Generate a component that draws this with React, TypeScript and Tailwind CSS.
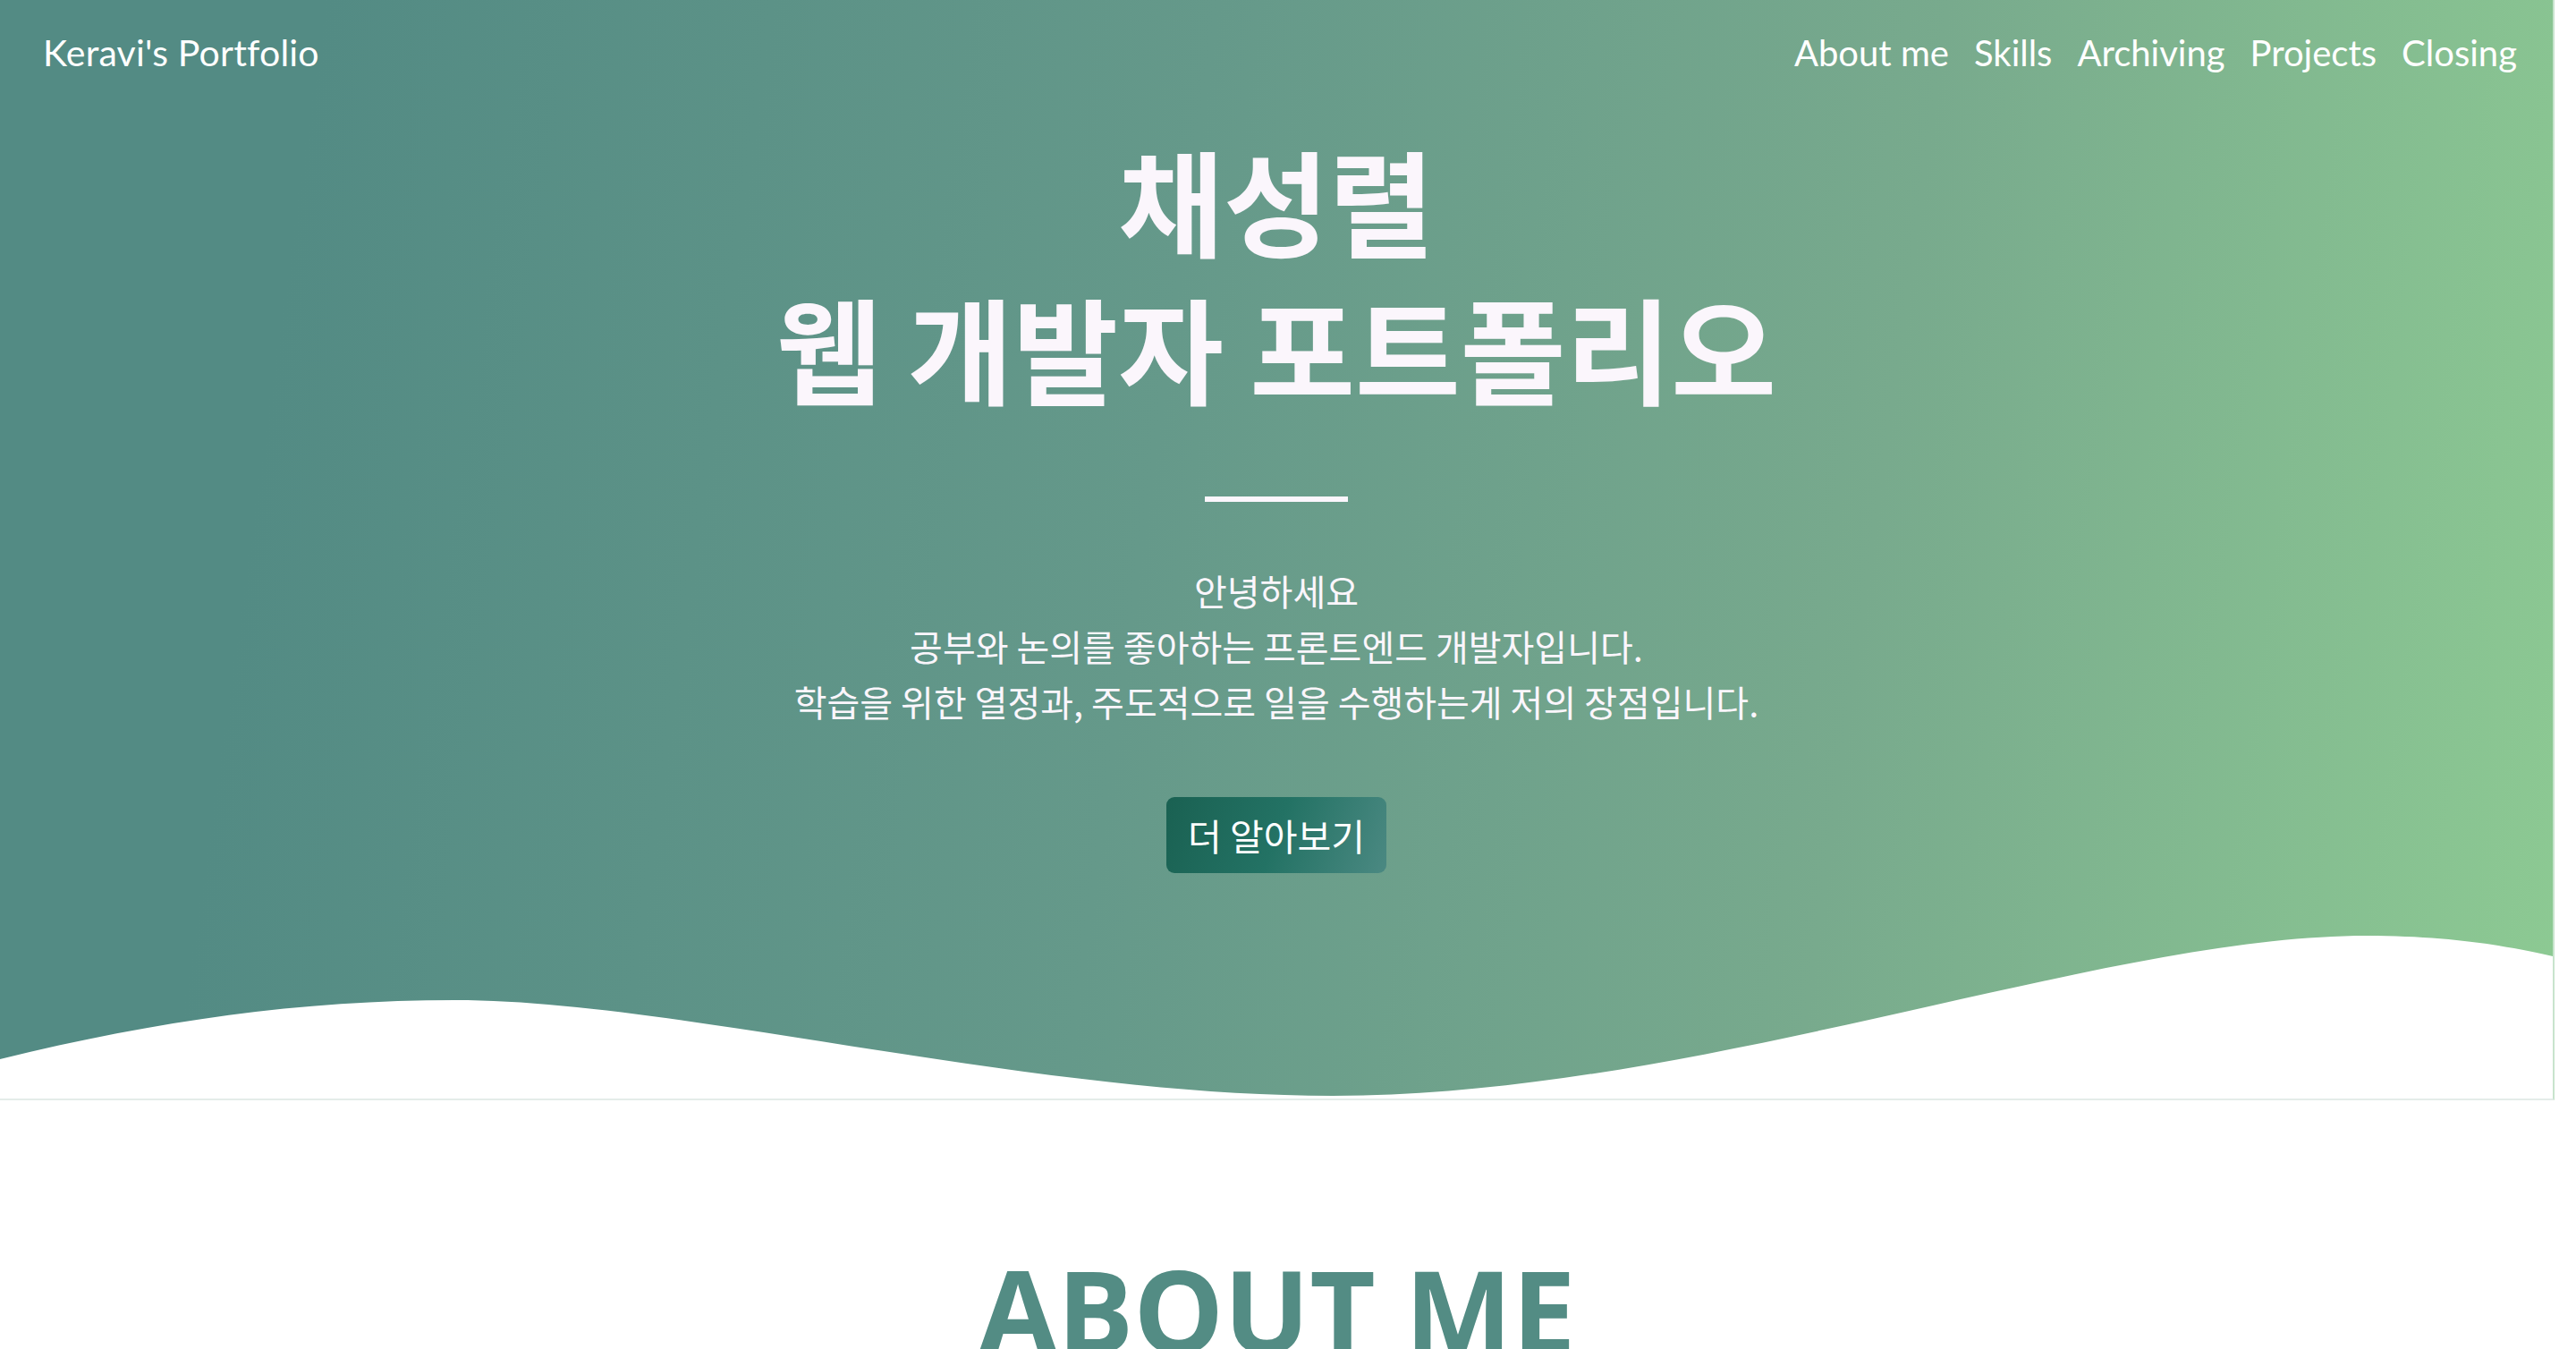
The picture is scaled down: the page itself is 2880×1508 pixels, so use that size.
const navLinks = ["About me", "Skills", "Archiving", "Projects", "Closing"];

function Wave() {
  return (
    <svg
      className="absolute bottom-0 left-0 w-full h-[200px]"
      viewBox="0 0 2856 200"
      preserveAspectRatio="none"
    >
      <path
        d="M0,156 C180,112 340,90 509,90 C760,90 1150,197 1491,197 C1900,197 2350,18 2648,18 C2740,18 2810,30 2856,41 L2856,200 L0,200 Z"
        fill="#ffffff"
      />
    </svg>
  );
}

function Hero() {
  return (
    <header className="relative w-full h-[1230px] border-r-2 border-b-2 border-r-[#c8e4cd] border-b-[#e4ece9] bg-[linear-gradient(98deg,#538b84_12%,#65998a_45%,#78aa8d_72%,#8dca93_100%)] overflow-hidden">
      <nav className="flex items-center justify-between h-[118px] pl-[48px] pr-[40px] font-['Lato','Liberation_Sans',sans-serif] text-white">
        <a href="#" className="text-[41px] tracking-[0.2px]">Keravi's Portfolio</a>
        <ul className="flex gap-[28px] text-[40px]">
          {navLinks.map((l) => (
            <li key={l}>
              <a href="#">{l}</a>
            </li>
          ))}
        </ul>
      </nav>

      <div className="flex flex-col items-center text-center text-[#fbf6fc] font-['Noto_Sans_CJK_KR',sans-serif]">
        <h1 className="mt-[22px] text-[128px] leading-[165px] font-bold">
          채성렬
          <br />
          웹 개발자 포트폴리오
        </h1>
        <hr className="mt-[85px] w-[160px] h-[6px] border-0 bg-[#fbf6fc]" />
        <p className="mt-[68px] text-[40px] leading-[62px] font-normal">
          안녕하세요
          <br />
          공부와 논의를 좋아하는 프론트엔드 개발자입니다.
          <br />
          학습을 위한 열정과, 주도적으로 일을 수행하는게 저의 장점입니다.
        </p>
        <button className="mt-[76px] w-[246px] h-[85px] rounded-[9px] bg-[linear-gradient(110deg,#1a6152_0%,#237264_50%,#4b8982_100%)] text-white text-[41px] font-normal">
          더 알아보기
        </button>
      </div>

      <Wave />
    </header>
  );
}

export default function App() {
  return (
    <div className="w-[2856px] min-h-screen bg-white">
      <Hero />
      <section className="flex justify-center pt-[170px] pb-[200px]">
        <h2 className="text-[127px] leading-none font-bold text-[#538c84] font-['Open_Sans','Liberation_Sans',sans-serif]">
          ABOUT ME
        </h2>
      </section>
    </div>
  );
}
